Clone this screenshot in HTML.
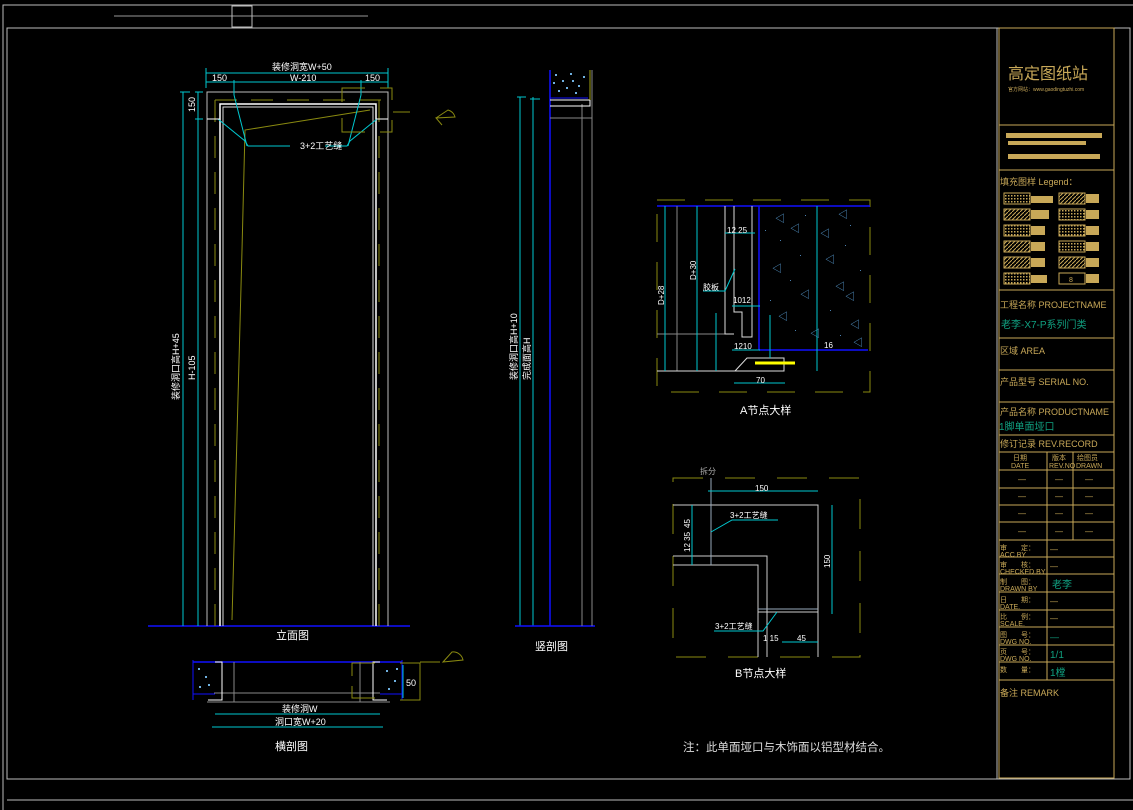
<!DOCTYPE html>
<html><head><meta charset="utf-8"><style>
html,body{margin:0;padding:0;background:#000;}
svg{display:block;}
text{font-family:"Liberation Sans","Noto Sans CJK SC",sans-serif;}
</style></head><body>
<svg width="1133" height="810" viewBox="0 0 1133 810" xmlns="http://www.w3.org/2000/svg">
<defs>
<pattern id="hatch" width="4" height="4" patternUnits="userSpaceOnUse"><path d="M0,4 L4,0" stroke="#c8a858" stroke-width="1"/></pattern>
<pattern id="dots" width="3" height="3" patternUnits="userSpaceOnUse"><rect width="1.5" height="1.5" fill="#c8a858"/></pattern>
</defs>
<rect width="1133" height="810" fill="#000"/>
<g fill="none" stroke="#bdbdbd" stroke-width="1">
<polyline points="3,810 3,5 1133,5"/>
<rect x="7" y="28" width="1123" height="751"/>
<line x1="7" y1="800" x2="1133" y2="800"/>
<line x1="114" y1="16" x2="368" y2="16" stroke="#999"/>
<rect x="232" y="6" width="20" height="21"/>
<line x1="997" y1="28" x2="997" y2="779"/>
</g>
<!-- Elevation -->
<g fill="none" stroke-width="1">
<line x1="148" y1="626" x2="410" y2="626" stroke="#1010ff" stroke-width="1.5"/>
<polyline points="207,626 207,92 388,92 388,626" stroke="#bbb"/>
<polyline points="220,626 220,104 376,104 376,626" stroke="#fff" stroke-width="1.5"/>
<polyline points="223,626 223,107 373,107 373,626" stroke="#ddd"/>
<g stroke="#8a8a10" stroke-dasharray="22,14">
<line x1="215" y1="100" x2="382" y2="100"/>
<line x1="215" y1="100" x2="215" y2="626"/>
<line x1="379" y1="100" x2="379" y2="626"/>
</g>
<polyline points="370,110 245,130 242,250 232,620" stroke="#8a8a10"/>
<g stroke="#00c8d0">
<line x1="183" y1="92" x2="183" y2="626"/><line x1="198" y1="92" x2="198" y2="626"/>
<line x1="180" y1="92" x2="190" y2="92"/><line x1="195" y1="92" x2="203" y2="92"/>
<line x1="195" y1="119" x2="203" y2="119"/>
<line x1="206" y1="73" x2="388" y2="73"/><line x1="206" y1="82" x2="388" y2="82"/>
<line x1="206" y1="68" x2="206" y2="88"/><line x1="388" y1="68" x2="388" y2="88"/>
<line x1="234" y1="80" x2="234" y2="95"/><line x1="361" y1="80" x2="361" y2="95"/>
<polyline points="218,119 245,141 248,146 290,146"/>
<polyline points="377,119 350,141 347,146 325,146"/>
<line x1="234" y1="95" x2="247" y2="146"/><line x1="361" y1="95" x2="348" y2="146"/>
</g>
<line x1="207" y1="119" x2="220" y2="119" stroke="#fff"/><line x1="376" y1="119" x2="388" y2="119" stroke="#fff"/>
<g stroke="#8a8a10">
<polyline points="342,102 342,88 365,88"/><polyline points="342,118 342,132 365,132"/>
<polyline points="380,88 392,88 392,100"/><polyline points="380,132 392,132 392,120"/>
<line x1="393" y1="112" x2="410" y2="112"/>
<path d="M436,118 L448,110 A10,10 0 0 1 455,117 L436,118 L442,125"/>
</g>
</g>
<g fill="#fff" font-size="9">
<text x="272" y="70">装修洞宽W+50</text>
<text x="212" y="81">150</text><text x="290" y="81">W-210</text><text x="365" y="81">150</text>
<text x="300" y="149">3+2工艺缝</text>
<text transform="translate(179,400) rotate(-90)">装修洞口高H+45</text>
<text transform="translate(195,380) rotate(-90)">H-105</text>
<text transform="translate(195,112) rotate(-90)">150</text>
<text x="276" y="639" font-size="11">立面图</text>
</g>
<!-- Vertical section -->
<g fill="none">
<line x1="520" y1="97" x2="520" y2="626" stroke="#00c8d0"/>
<line x1="533" y1="97" x2="533" y2="626" stroke="#00c8d0"/>
<line x1="517" y1="97" x2="526" y2="97" stroke="#00c8d0"/><line x1="530" y1="99" x2="540" y2="99" stroke="#00c8d0"/>
<line x1="550" y1="70" x2="550" y2="626" stroke="#1010ff" stroke-width="1.5"/>
<line x1="515" y1="626" x2="595" y2="626" stroke="#1010ff" stroke-width="1.5"/>
<line x1="582" y1="104" x2="582" y2="626" stroke="#888"/>
<line x1="592" y1="70" x2="592" y2="626" stroke="#888"/>
<line x1="550" y1="118" x2="592" y2="118" stroke="#888"/>
<line x1="550" y1="98" x2="588" y2="98" stroke="#1010ff"/>
<polyline points="550,100 590,100 590,106 550,106" stroke="#fff"/>
<line x1="590" y1="70" x2="590" y2="100" stroke="#a0a010"/>
</g>
<g fill="#6fb0e0">
<rect x="555" y="74" width="2" height="2"/><rect x="562" y="80" width="2" height="2"/><rect x="570" y="73" width="2" height="2"/><rect x="578" y="85" width="2" height="2"/><rect x="558" y="90" width="2" height="2"/><rect x="575" y="92" width="2" height="2"/><rect x="583" y="76" width="2" height="2"/><rect x="566" y="87" width="2" height="2"/><rect x="553" y="82" width="2" height="2"/><rect x="572" y="80" width="2" height="2"/>
</g>
<g fill="#fff" font-size="9">
<text transform="translate(517,380) rotate(-90)">装修洞口高H+10</text>
<text transform="translate(530,380) rotate(-90)">完成面高H</text>
<text x="535" y="650" font-size="11">竖剖图</text>
</g>
<!-- Cross section -->
<g fill="none">
<line x1="193" y1="662" x2="402" y2="662" stroke="#1010ff" stroke-width="1.5"/>
<line x1="193" y1="660" x2="193" y2="700" stroke="#1010ff"/>
<line x1="402" y1="660" x2="402" y2="700" stroke="#1010ff"/>
<line x1="193" y1="694" x2="215" y2="694" stroke="#1010ff"/>
<line x1="380" y1="694" x2="402" y2="694" stroke="#1010ff"/>
<line x1="214" y1="693" x2="380" y2="693" stroke="#888"/>
<line x1="207" y1="702" x2="390" y2="702" stroke="#888"/>
<line x1="234" y1="662" x2="234" y2="702" stroke="#888"/><line x1="360" y1="662" x2="360" y2="702" stroke="#888"/>
<polyline points="215,662 222,662 222,700 208,700" stroke="#fff"/>
<polyline points="380,662 373,662 373,700 387,700" stroke="#fff"/>
<g stroke="#00c8d0"><line x1="215" y1="714" x2="380" y2="714"/><line x1="212" y1="727" x2="383" y2="727"/>
<line x1="403" y1="665" x2="403" y2="698"/></g>
<g stroke="#8a8a10"><polyline points="352,676 352,663 375,663"/><polyline points="352,686 352,698 375,698"/>
<polyline points="400,663 420,663 420,700 400,700"/><line x1="420" y1="662" x2="440" y2="662"/>
<path d="M443,662 L452,652 A10,10 0 0 1 463,660 Z"/></g>
</g>
<g fill="#6fb0e0"><rect x="198" y="668" width="2" height="2"/><rect x="205" y="676" width="2" height="2"/><rect x="199" y="686" width="2" height="2"/><rect x="208" y="684" width="2" height="2"/><rect x="386" y="670" width="2" height="2"/><rect x="394" y="680" width="2" height="2"/><rect x="388" y="688" width="2" height="2"/><rect x="396" y="668" width="2" height="2"/></g>
<g fill="#fff" font-size="9">
<text x="282" y="712">装修洞W</text><text x="275" y="725">洞口宽W+20</text>
<text x="406" y="686">50</text>
<text x="275" y="750" font-size="11">横剖图</text>
</g>
<!-- A detail -->
<g fill="none">
<rect x="657" y="200" width="213" height="192" stroke="#8a8a10" stroke-dasharray="28,20"/>
<line x1="657" y1="206" x2="870" y2="206" stroke="#1010ff" stroke-width="1.5"/>
<line x1="759" y1="206" x2="759" y2="350" stroke="#1010ff" stroke-width="1.5"/>
<line x1="759" y1="350" x2="868" y2="350" stroke="#1010ff" stroke-width="1.5"/>
<line x1="677" y1="206" x2="677" y2="371" stroke="#888"/>
<line x1="657" y1="334" x2="734" y2="334" stroke="#888"/>
<polyline points="725,206 725,334 734,334" stroke="#ddd"/>
<polyline points="734,206 734,312 742,312 742,337 752,337 752,206" stroke="#ddd"/>
<polyline points="657,371 784,371 784,358 747,358 735,371" stroke="#ddd"/>
<line x1="755" y1="363" x2="795" y2="363" stroke="#ffff00" stroke-width="3"/>
<g stroke="#00c8d0">
<line x1="665" y1="206" x2="665" y2="371"/><line x1="697" y1="206" x2="697" y2="371"/>
<line x1="716" y1="313" x2="716" y2="371"/>
<line x1="725" y1="233" x2="755" y2="233"/><line x1="732" y1="306" x2="760" y2="306"/>
<line x1="732" y1="350" x2="760" y2="350"/>
<line x1="734" y1="383" x2="785" y2="383"/>
<line x1="770" y1="315" x2="770" y2="358"/><line x1="817" y1="206" x2="817" y2="371"/>
<polyline points="703,291 725,291 735,269"/>
</g>
</g>
<g fill="#5aa0d8" font-size="10">
<text x="775" y="222">◁</text><text x="790" y="232">◁</text><text x="838" y="218">◁</text><text x="820" y="237">◁</text><text x="772" y="272">◁</text><text x="835" y="290">◁</text><text x="800" y="298">◁</text><text x="845" y="300">◁</text><text x="850" y="328">◁</text><text x="810" y="337">◁</text><text x="853" y="346">◁</text><text x="825" y="263">◁</text><text x="778" y="320">◁</text>
</g>
<g fill="#4a80b0">
<rect x="780" y="240" width="1" height="1"/><rect x="800" y="255" width="1" height="1"/><rect x="845" y="245" width="1" height="1"/><rect x="790" y="280" width="1" height="1"/><rect x="830" y="310" width="1" height="1"/><rect x="860" y="270" width="1" height="1"/><rect x="770" y="300" width="1" height="1"/><rect x="805" y="215" width="1" height="1"/><rect x="850" y="225" width="1" height="1"/><rect x="795" y="330" width="1" height="1"/><rect x="765" y="230" width="1" height="1"/><rect x="840" y="335" width="1" height="1"/>
</g>
<g fill="#fff" font-size="8">
<text x="727" y="233">12 25</text><text x="733" y="303">1012</text><text x="734" y="349">1210</text>
<text x="703" y="290">胶板</text><text x="756" y="383">70</text>
<text transform="translate(664,305) rotate(-90)">D+28</text>
<text transform="translate(696,280) rotate(-90)">D+30</text>
<text x="824" y="348">16</text>
<text x="740" y="414" font-size="11">A节点大样</text>
</g>
<!-- B detail -->
<g fill="none">
<rect x="673" y="478" width="187" height="179" stroke="#8a8a10" stroke-dasharray="30,22"/>
<polyline points="673,505 818,505 818,657" stroke="#ccc"/>
<polyline points="673,556 767,556 767,657" stroke="#ccc"/>
<polyline points="673,565 758,565 758,657" stroke="#ccc"/>
<line x1="711" y1="478" x2="711" y2="565" stroke="#9ab"/>
<line x1="758" y1="612" x2="818" y2="612" stroke="#ccc"/>
<line x1="758" y1="609" x2="818" y2="609" stroke="#9ab"/>
<g stroke="#00c8d0">
<line x1="708" y1="491" x2="818" y2="491"/>
<line x1="832" y1="505" x2="832" y2="614"/>
<line x1="692" y1="505" x2="692" y2="565"/>
<polyline points="711,532 732,520 778,520"/>
<polyline points="777,612 763,631 714,631"/>
<line x1="782" y1="642" x2="818" y2="642"/>
</g>
</g>
<g fill="#fff" font-size="8">
<text x="755" y="491">150</text><text x="730" y="518">3+2工艺缝</text><text x="715" y="629">3+2工艺缝</text>
<text transform="translate(690,528) rotate(-90)">45</text><text transform="translate(690,552) rotate(-90)">12 35</text>
<text transform="translate(830,568) rotate(-90)">150</text>
<text x="763" y="641">1 15</text><text x="797" y="641">45</text>
<text x="700" y="474" fill="#aaa">拆分</text>
<text x="735" y="677" font-size="11">B节点大样</text>
</g>
<text x="683" y="751" fill="#ddd" font-size="11.5">注：此单面垭口与木饰面以铝型材结合。</text>
<!-- Title block -->
<g fill="none" stroke="#c8a858" stroke-width="1">
<rect x="999" y="28" width="115" height="750"/>
<line x1="999" y1="125" x2="1114" y2="125"/><line x1="999" y1="170" x2="1114" y2="170"/>
<line x1="999" y1="290" x2="1114" y2="290"/><line x1="999" y1="338" x2="1114" y2="338"/>
<line x1="999" y1="370" x2="1114" y2="370"/><line x1="999" y1="402" x2="1114" y2="402"/>
<line x1="999" y1="435" x2="1114" y2="435"/><line x1="999" y1="452" x2="1114" y2="452"/>
<line x1="999" y1="470" x2="1114" y2="470"/><line x1="999" y1="488" x2="1114" y2="488"/>
<line x1="999" y1="505" x2="1114" y2="505"/><line x1="999" y1="522" x2="1114" y2="522"/>
<line x1="999" y1="540" x2="1114" y2="540"/><line x1="999" y1="557" x2="1114" y2="557"/>
<line x1="999" y1="574" x2="1114" y2="574"/><line x1="999" y1="592" x2="1114" y2="592"/>
<line x1="999" y1="610" x2="1114" y2="610"/><line x1="999" y1="627" x2="1114" y2="627"/>
<line x1="999" y1="645" x2="1114" y2="645"/><line x1="999" y1="662" x2="1114" y2="662"/>
<line x1="999" y1="680" x2="1114" y2="680"/>
<line x1="1047" y1="452" x2="1047" y2="680"/><line x1="1073" y1="452" x2="1073" y2="540"/>
</g>
<g fill="#c8a858">
<text x="1008" y="79" font-size="16" font-family="Liberation Serif,Noto Serif CJK SC,serif">高定图纸站</text>
<text x="1008" y="91" font-size="5">官方网站：www.gaodingtuzhi.com</text>
<rect x="1006" y="133" width="96" height="5"/><rect x="1008" y="141" width="78" height="4"/><rect x="1008" y="154" width="92" height="5"/>
<text x="1000" y="185" font-size="9">填充图样 Legend：</text>
<text x="1000" y="308" font-size="9">工程名称 PROJECTNAME</text>
<text x="1000" y="354" font-size="9">区域 AREA</text>
<text x="1000" y="385" font-size="9">产品型号 SERIAL NO.</text>
<text x="1000" y="415" font-size="9">产品名称 PRODUCTNAME</text>
<text x="1000" y="447" font-size="9">修订记录 REV.RECORD</text>
<text x="1013" y="460" font-size="7">日期</text><text x="1011" y="468" font-size="7">DATE</text>
<text x="1052" y="460" font-size="7">版本</text><text x="1049" y="468" font-size="7">REV.NO</text>
<text x="1077" y="460" font-size="7">绘图员</text><text x="1076" y="468" font-size="7">DRAWN</text>
<text x="1000" y="550" font-size="7">审　　定：</text><text x="1000" y="557" font-size="7">ACC BY</text>
<text x="1000" y="567" font-size="7">审　　核：</text><text x="1000" y="574" font-size="7">CHECKED BY</text>
<text x="1000" y="584" font-size="7">制　　图：</text><text x="1000" y="591" font-size="7">DRAWN BY</text>
<text x="1000" y="602" font-size="7">日　　期：</text><text x="1000" y="609" font-size="7">DATE.</text>
<text x="1000" y="619" font-size="7">比　　例：</text><text x="1000" y="626" font-size="7">SCALE.</text>
<text x="1000" y="637" font-size="7">图　　号：</text><text x="1000" y="644" font-size="7">DWG NO.</text>
<text x="1000" y="654" font-size="7">页　　号：</text><text x="1000" y="661" font-size="7">DWG NO.</text>
<text x="1000" y="672" font-size="7">数　　量：</text>
<text x="1000" y="696" font-size="9">备注 REMARK</text>
<text x="1018" y="482" font-size="8">—</text><text x="1055" y="482" font-size="8">—</text><text x="1085" y="482" font-size="8">—</text>
<text x="1018" y="499" font-size="8">—</text><text x="1055" y="499" font-size="8">—</text><text x="1085" y="499" font-size="8">—</text>
<text x="1018" y="516" font-size="8">—</text><text x="1055" y="516" font-size="8">—</text><text x="1085" y="516" font-size="8">—</text>
<text x="1018" y="534" font-size="8">—</text><text x="1055" y="534" font-size="8">—</text><text x="1085" y="534" font-size="8">—</text>
<text x="1050" y="552" font-size="8">—</text><text x="1050" y="569" font-size="8">—</text>
<text x="1050" y="604" font-size="8">—</text><text x="1050" y="621" font-size="8">—</text>
</g>
<g stroke="#c8a858">
<rect x="1004" y="193" width="26" height="11" fill="url(#dots)"/><rect x="1059" y="193" width="26" height="11" fill="url(#hatch)"/>
<rect x="1004" y="209" width="26" height="11" fill="url(#hatch)"/><rect x="1059" y="209" width="26" height="11" fill="url(#dots)"/>
<rect x="1004" y="225" width="26" height="11" fill="url(#dots)"/><rect x="1059" y="225" width="26" height="11" fill="url(#dots)"/>
<rect x="1004" y="241" width="26" height="11" fill="url(#hatch)"/><rect x="1059" y="241" width="26" height="11" fill="url(#dots)"/>
<rect x="1004" y="257" width="26" height="11" fill="url(#hatch)"/><rect x="1059" y="257" width="26" height="11" fill="url(#hatch)"/>
<rect x="1004" y="273" width="26" height="11" fill="url(#dots)"/><rect x="1059" y="273" width="26" height="11" fill="none"/>
</g>
<g fill="#c8a858">
<rect x="1031" y="196" width="22" height="7"/><rect x="1086" y="194" width="13" height="9"/>
<rect x="1031" y="210" width="18" height="9"/><rect x="1086" y="210" width="13" height="9"/>
<rect x="1031" y="226" width="14" height="9"/><rect x="1086" y="226" width="13" height="9"/>
<rect x="1031" y="242" width="14" height="9"/><rect x="1086" y="242" width="13" height="9"/>
<rect x="1031" y="258" width="14" height="9"/><rect x="1086" y="258" width="13" height="9"/>
<rect x="1031" y="275" width="16" height="8"/><rect x="1086" y="274" width="13" height="9"/>
<text x="1069" y="282" font-size="7">8</text>
</g>
<g fill="#10a080">
<text x="1001" y="328" font-size="10">老李-X7-P系列门类</text>
<text x="999" y="430" font-size="10">1脚单面垭口</text>
<text x="1052" y="588" font-size="10">老李</text>
<text x="1050" y="640" font-size="9">—</text>
<text x="1050" y="658" font-size="10">1/1</text>
<text x="1050" y="676" font-size="10">1樘</text>
</g>
</svg>
</body></html>
